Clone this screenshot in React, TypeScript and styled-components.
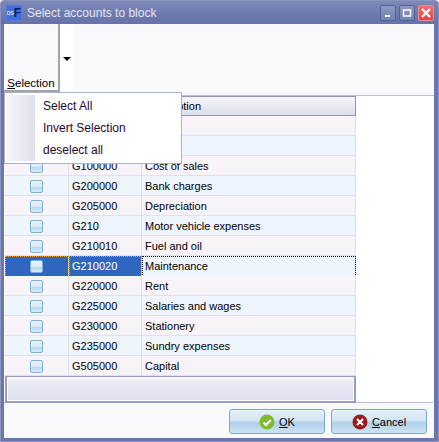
import React from "react";
import styled, { createGlobalStyle } from "styled-components";

const Global = createGlobalStyle`
  html, body { margin: 0; padding: 0; background: #fff; }
  body { font-family: "Liberation Sans", Arial, sans-serif; font-size: 11px; color: #000; }
  * { box-sizing: border-box; }
`;

const Win = styled.div`
  width: 439px; height: 442px; display: flex; flex-direction: column; position: relative;
  background: #6a77ad; border: 1px solid #8c95bd; border-radius: 4px 4px 0 0; overflow: hidden;
`;
const TitleBar = styled.div`
  height: 23px; flex: none; display: flex; align-items: center; padding: 0 4px 0 5px;
  background: linear-gradient(#7e89b8, #6d79ae 60%, #6874a9);
`;
const Logo = styled.div`
  width: 16px; height: 16px; flex: none; background: #3f6fe0; border: 1px solid #5a78d0; color: #101a60;
  font: bold 12px/14px "Liberation Sans", sans-serif; display: flex; justify-content: flex-end; align-items: center; overflow: hidden;
`;
const LogoSmall = styled.span`
  color: #d8e4ff; font-size: 5px; line-height: 14px; font-weight: bold;
`;
const Title = styled.div`
  margin-left: 5px; flex: 1; color: #e4e6f2; font-size: 12px; letter-spacing: 0; padding-top: 1px;
`;
const WinBtn = styled.div<{ $close?: boolean }>`
  width: 16px; height: 16px; margin-left: 3px; flex: none; border-radius: 2px; display: flex; align-items: center; justify-content: center;
  border: 1px solid ${p => (p.$close ? "#e89090" : "#525e96")};
  background: ${p => (p.$close ? "linear-gradient(#ee7070,#e84040)" : "linear-gradient(#8e98c4,#7581b4)")};
`;
const Body = styled.div`
  flex: 1; margin: 0 4px 3px 3px; display: flex; flex-direction: column; background: #f9f9fc; min-height: 0;
`;
const Ribbon = styled.div`
  height: 72px; flex: none; display: flex; background: #f9f9fc; border-bottom: 1px solid #b9bedb;
`;
const SelectionBtn = styled.div`
  width: 56px; height: 68px; display: flex; align-items: flex-end; justify-content: center; padding-bottom: 1px;
  border-right: 2px solid #a4a4a4; border-bottom: 2px solid #a4a4a4; font-size: 11.5px;
  u { text-decoration: underline; }
`;
const Arrow = styled.div`
  width: 14px; height: 68px; display: flex; align-items: center; justify-content: center; background: #fff;
  &::after { content: ""; border-left: 4px solid transparent; border-right: 4px solid transparent; border-top: 4px solid #000; margin-top: 1px; }
`;
const Content = styled.div`
  height: 307px; flex: none; display: flex; background: #fff; border-bottom: 1px solid #b9bedb; margin-right: 1px;
`;
const Grid = styled.div`
  width: 352px; flex: none; display: flex; flex-direction: column; padding-left: 1px;
`;
const HeaderRow = styled.div`
  height: 20px; flex: none; display: grid; grid-template-columns: 64px 73px 214px;
  border: 1px solid #8f93b8; background: linear-gradient(#f6f6fa,#dcdeea);
`;
const HeadCell = styled.div`
  padding-left: 3px; line-height: 19px; border-right: 1px solid #cfd2e2;
  &:last-child { border-right: 0; }
`;
const Row = styled.div<{ $alt: boolean }>`
  height: 20px; flex: none; display: grid; grid-template-columns: 64px 73px 214px;
  background: ${p => (p.$alt ? "#eef5fd" : "#f9f4fa")};
  border-bottom: 1px solid #e0e0f2;
`;
const CheckCell = styled.div<{ $sel?: boolean }>`
  display: flex; align-items: center; justify-content: center; border-right: 1px solid #dcdcf2;
  background: ${p => (p.$sel ? "#3166c0" : "transparent")};
  ${p => p.$sel && "outline: 1px dotted #e0a040; outline-offset: -1px;"}
`;
const Check = styled.span`
  width: 13px; height: 13px; border-radius: 2px; border: 1px solid #7cb0de;
  background: linear-gradient(#eaf3fb 0%, #dbe9f6 50%, #b4d8f2 60%, #d9ecfa 100%);
`;
const Cell = styled.div<{ $sel?: boolean; $focus?: boolean }>`
  padding-left: 3px; line-height: 21px; border-right: 1px solid #dcdcf2; white-space: nowrap;
  ${p => p.$sel && "background:#3166c0;color:#fff;outline:1px dotted #e0a040;outline-offset:-1px;"}
  ${p => p.$focus && "background:#eef5fd;outline:1px dotted #000;outline-offset:-1px;"}
`;
const Summary = styled.div`
  height: 27px; flex: none; margin-top: 0; border: 2px solid #9a9ec4; border-top-width: 1px;
  outline: 1px solid #fff; outline-offset: -3px;
  background: linear-gradient(#eceef4,#dcdfeb);
`;
const Footer = styled.div`
  flex: 1; display: flex; justify-content: flex-end; align-items: flex-start; gap: 6px; padding: 6px 7px 0 0; background: #f9f9fc;
`;
const Btn = styled.div`
  width: 96px; height: 25px; display: flex; align-items: center; justify-content: center; gap: 4px;
  border: 1px solid #7ea6cf; border-radius: 3px; font-size: 11px;
  background: linear-gradient(#e8f1f9, #d3e4f2 45%, #aed0ea 55%, #cde3f4);
  u { text-decoration: underline; }
`;
const Menu = styled.div`
  position: absolute; left: 3px; top: 91px; width: 178px; height: 72px; background: #fff;
  border: 1px solid #aab1d0; padding: 2px; display: flex;
`;
const MenuStrip = styled.div`
  width: 28px; flex: none; background: linear-gradient(90deg,#f5f5f9,#dde0ea);
`;
const MenuList = styled.div`
  flex: 1; display: flex; flex-direction: column; padding-left: 8px;
`;
const MenuItem = styled.div`
  height: 22px; line-height: 22px; font-size: 12px; color: #1c0a30;
`;

const rows: [string, string][] = [
  ["", ""], ["", ""],
  ["G100000", "Cost of sales"], ["G200000", "Bank charges"], ["G205000", "Depreciation"],
  ["G210", "Motor vehicle expenses"], ["G210010", "Fuel and oil"], ["G210020", "Maintenance"],
  ["G220000", "Rent"], ["G225000", "Salaries and wages"], ["G230000", "Stationery"],
  ["G235000", "Sundry expenses"], ["G505000", "Capital"],
];

const OkIcon = () => (
  <svg width="16" height="16" viewBox="0 0 16 16">
    <circle cx="8" cy="8" r="7.5" fill="#7fba2c" />
    <path d="M4.5 8.5 7 11l4.8-5" fill="none" stroke="#fff" strokeWidth="2.2" />
  </svg>
);
const CancelIcon = () => (
  <svg width="16" height="16" viewBox="0 0 16 16">
    <circle cx="8" cy="8" r="7.5" fill="#9c1a1a" />
    <path d="M5 5l6 6M11 5l-6 6" fill="none" stroke="#fff" strokeWidth="2.2" />
  </svg>
);

export default function App() {
  return (
    <>
      <Global />
      <Win>
        <TitleBar>
          <Logo><LogoSmall>OS</LogoSmall>F</Logo>
          <Title>Select accounts to block</Title>
          <WinBtn>
            <svg width="10" height="10" viewBox="0 0 10 10"><rect x="2" y="7" width="5" height="2" fill="#fff" /></svg>
          </WinBtn>
          <WinBtn>
            <svg width="10" height="10" viewBox="0 0 10 10"><rect x="1.5" y="2" width="7" height="6" fill="none" stroke="#fff" strokeWidth="1.5" /></svg>
          </WinBtn>
          <WinBtn $close>
            <svg width="12" height="12" viewBox="0 0 12 12"><path d="M2 2l8 8M10 2l-8 8" stroke="#fff" strokeWidth="2.4" /></svg>
          </WinBtn>
        </TitleBar>
        <Body>
          <Ribbon>
            <SelectionBtn><span><u>S</u>election</span></SelectionBtn>
            <Arrow />
          </Ribbon>
          <Content>
            <Grid>
              <HeaderRow>
                <HeadCell />
                <HeadCell />
                <HeadCell>Description</HeadCell>
              </HeaderRow>
              {rows.map((r, i) => {
                const sel = r[0] === "G210020";
                return (
                  <Row key={i} $alt={i % 2 === 1}>
                    <CheckCell $sel={sel}>{r[0] && <Check />}</CheckCell>
                    <Cell $sel={sel}>{r[0]}</Cell>
                    <Cell $focus={sel}>{r[1]}</Cell>
                  </Row>
                );
              })}
              <Summary />
            </Grid>
          </Content>
          <Footer>
            <Btn><OkIcon /><span><u>O</u>K</span></Btn>
            <Btn><CancelIcon /><span><u>C</u>ancel</span></Btn>
          </Footer>
        </Body>
        <Menu>
          <MenuStrip />
          <MenuList>
            <MenuItem>Select All</MenuItem>
            <MenuItem>Invert Selection</MenuItem>
            <MenuItem>deselect all</MenuItem>
          </MenuList>
        </Menu>
      </Win>
    </>
  );
}
